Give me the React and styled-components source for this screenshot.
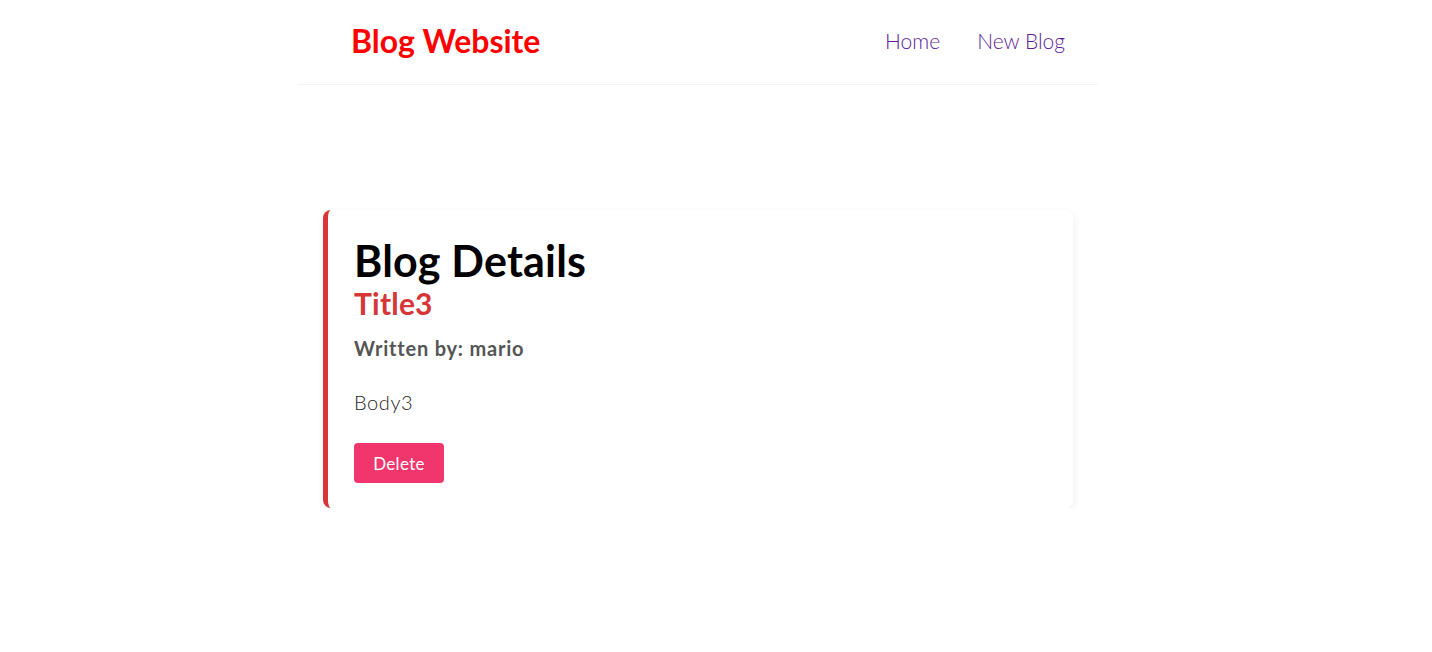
import React from "react";
import styled, { createGlobalStyle } from "styled-components";

const Global = createGlobalStyle`
  html, body { margin: 0; padding: 0; background: #fff; }
  body { font-family: Lato, "Noto Sans", sans-serif; color: #333; }
  * { box-sizing: border-box; }
`;

const Page = styled.div`
  padding-right: 36px;
`;

const Navbar = styled.nav`
  width: 800px;
  height: 85px;
  margin: 0 auto;
  padding: 0 33px 4px 53px;
  display: flex;
  align-items: center;
  border-bottom: 1px solid #f2f2f2;
`;

const Brand = styled.h1`
  margin: 0;
  font-size: 32px;
  font-weight: 700;
  color: #ff0000;
`;

const Links = styled.div`
  margin-left: auto;
  display: flex;
  gap: 37px;
`;

const NavLink = styled.a`
  font-size: 21px;
  font-weight: 300;
  color: #5e1e99;
  text-decoration: none;
`;

const Content = styled.main`
  width: 750px;
  margin: 125px auto 0;
`;

const Card = styled.article`
  background: #fff;
  border-left: 5px solid #d63638;
  border-radius: 8px;
  box-shadow: 1px 3px 10px rgba(0, 0, 0, 0.06);
  padding: 27px 26px 25px;
  display: flex;
  flex-direction: column;
  align-items: flex-start;
`;

const Heading = styled.h2`
  margin: 0;
  font-size: 43px;
  line-height: 48px;
  font-weight: 700;
  letter-spacing: 0.2px;
  color: #000;
`;

const Title = styled.h2`
  margin: 0;
  font-size: 30px;
  line-height: 36px;
  font-weight: 700;
  letter-spacing: 0.2px;
  color: #d63638;
`;

const Author = styled.p`
  margin: 15px 0 0;
  font-size: 20px;
  line-height: 24px;
  font-weight: 700;
  letter-spacing: 0.8px;
  color: #555;
`;

const Body = styled.div`
  margin: 30px 0 0;
  font-size: 20px;
  line-height: 24px;
  font-weight: 300;
  letter-spacing: 0.6px;
  color: #1e1e1e;
`;

const Button = styled.button`
  margin-top: 29px;
  width: 90px;
  height: 40px;
  border: 0;
  border-radius: 4px;
  background: #f1356d;
  color: #fff;
  font-family: inherit;
  font-size: 17px;
  letter-spacing: 0.3px;
  cursor: pointer;
`;

export default function App() {
  return (
    <Page>
      <Global />
      <Navbar>
        <Brand>Blog Website</Brand>
        <Links>
          <NavLink href="#">Home</NavLink>
          <NavLink href="#">New Blog</NavLink>
        </Links>
      </Navbar>
      <Content>
        <Card>
          <Heading>Blog Details</Heading>
          <Title>Title3</Title>
          <Author>Written by: mario</Author>
          <Body>Body3</Body>
          <Button>Delete</Button>
        </Card>
      </Content>
    </Page>
  );
}
